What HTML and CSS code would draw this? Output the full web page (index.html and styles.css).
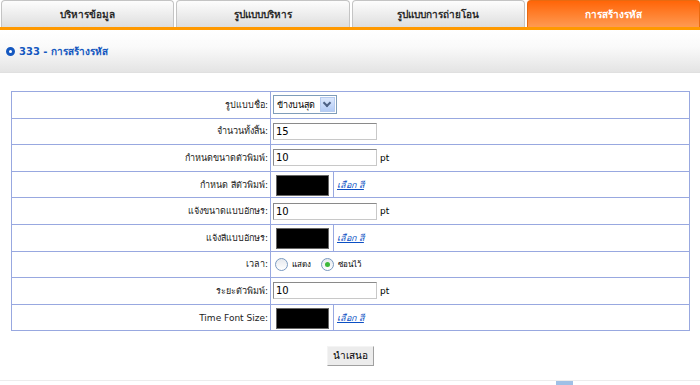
FILE: index.html
```html
<!DOCTYPE html>
<html lang="th">
<head>
  <meta charset="UTF-8">
  <title>การสร้างรหัส</title>
  <link rel="stylesheet" href="styles.css">
</head>
<body>
  <div class="tabs">
    <div class="tab">บริหารข้อมูล</div>
    <div class="tab">รูปแบบบริหาร</div>
    <div class="tab">รูปแบบการถ่ายโอน</div>
    <div class="tab active">การสร้างรหัส</div>
  </div>

  <div class="titlebar">
    <span class="bullet"></span>
    <span class="title">333 - การสร้างรหัส</span>
  </div>

  <!-- ฟอร์มตั้งค่า -->
  <table class="form">
    <tr>
      <td class="label">รูปแบบชื่อ:</td>
      <td class="field">
        <span class="select">ข้างบนสุด<span class="arrow"></span></span>
      </td>
    </tr>
    <tr>
      <td class="label">จำนวนทั้งสิ้น:</td>
      <td class="field"><span class="input">15</span></td>
    </tr>
    <tr>
      <td class="label">กำหนดขนาดตัวพิมพ์:</td>
      <td class="field"><span class="input">10</span><span class="unit">pt</span></td>
    </tr>
    <tr>
      <td class="label">กำหนด สีตัวพิมพ์:</td>
      <td class="field color-field">
        <div class="color-row"><span class="swatch"></span><a class="pick" href="#">เลือก สี</a></div>
      </td>
    </tr>
    <tr>
      <td class="label">แจ้งขนาดแบบอักษร:</td>
      <td class="field"><span class="input">10</span><span class="unit">pt</span></td>
    </tr>
    <tr>
      <td class="label">แจ้งสีแบบอักษร:</td>
      <td class="field color-field">
        <div class="color-row"><span class="swatch"></span><a class="pick" href="#">เลือก สี</a></div>
      </td>
    </tr>
    <tr>
      <td class="label">เวลา:</td>
      <td class="field">
        <span class="radio"></span><span class="radio-text">แสดง</span>
        <span class="radio checked"></span><span class="radio-text">ซ่อนไว้</span>
      </td>
    </tr>
    <tr>
      <td class="label">ระยะตัวพิมพ์:</td>
      <td class="field"><span class="input">10</span><span class="unit">pt</span></td>
    </tr>
    <tr>
      <td class="label">Time Font Size:</td>
      <td class="field color-field">
        <div class="color-row"><span class="swatch"></span><a class="pick" href="#">เลือก สี</a></div>
      </td>
    </tr>
  </table>

  <div class="actions">
    <span class="btn">นำเสนอ</span>
  </div>

  <div class="footer"><span class="footer-mark"></span></div>
</body>
</html>
```

FILE: styles.css
```css
body {
  margin: 0;
  background: #fff;
  font-family: "DejaVu Sans", "Noto Sans", sans-serif;
  font-size: 10px;
  color: #000;
}

/* แท็บด้านบน */
.tabs {
  display: flex;
  gap: 2px;
  padding-left: 1px;
  border-bottom: 3px solid #ff9900;
}

.tab {
  flex: 1;
  height: 26px;
  line-height: 27px;
  text-align: center;
  font-weight: bold;
  font-size: 10px;
  color: #2a2a2a;
  border: 1px solid #c4c4c4;
  border-bottom: none;
  border-radius: 4px 4px 0 0;
  background: linear-gradient(#fdfdfd, #dedede);
}

.tab.active {
  color: #fff;
  border-color: #e86a10;
  background: linear-gradient(#ff6508, #ff9a52);
}

/* แถบหัวข้อ */
.titlebar {
  height: 42px;
  display: flex;
  align-items: center;
  padding-left: 6px;
  gap: 4px;
  background: linear-gradient(#ffffff, #fafafa 40%, #e4e4e4);
  border-bottom: 1px solid #e0e0e0;
}

.bullet {
  width: 3px;
  height: 3px;
  border-radius: 50%;
  border: 3px solid #1558c0;
  background: #fff;
}

.title {
  color: #1558c0;
  font-weight: bold;
  font-size: 10px;
}

/* ตาราง */
.form {
  margin: 18px 0 0 11px;
  width: 679px;
  border-collapse: collapse;
}

.form td {
  border: 1px solid #98a8e0;
  height: 25.6px;
  padding: 0;
}

.label {
  width: 256px;
  text-align: right;
  padding-right: 2px !important;
  font-size: 9px;
  color: #222;
}

.field {
  padding-left: 2px !important;
}

.input {
  display: inline-block;
  width: 100px;
  height: 15px;
  line-height: 15px;
  padding-left: 2px;
  border: 1px solid #8a8a8a;
  border-right-color: #c8c8c8;
  border-bottom-color: #c8c8c8;
  font-size: 10px;
  vertical-align: middle;
}

.unit {
  margin-left: 3px;
  vertical-align: middle;
  font-size: 9px;
}

.select {
  display: inline-flex;
  align-items: center;
  justify-content: space-between;
  box-sizing: border-box;
  width: 64px;
  height: 19px;
  padding-left: 3px;
  border: 1px solid #7f9db9;
  font-size: 9px;
  vertical-align: middle;
}

.arrow {
  width: 15px;
  height: 15px;
  margin-right: 1px;
  background: linear-gradient(#dce8fd, #b4ccf6);
  border: 1px solid #b6cbef;
  box-sizing: border-box;
  position: relative;
}

.arrow::after {
  content: "";
  position: absolute;
  left: 3px;
  top: 2px;
  width: 4px;
  height: 4px;
  border-right: 2px solid #4d6185;
  border-bottom: 2px solid #4d6185;
  transform: rotate(45deg);
}

.color-field {
  padding-left: 0 !important;
}

.color-row {
  display: flex;
  align-items: stretch;
  height: 25.6px;
}

.swatch {
  width: 51px;
  height: 19px;
  margin: 3px 4px 0 5px;
  background: #000;
  border: 1px solid #666;
}

.color-row .pick {
  border-left: 1px solid #98a8e0;
  padding-left: 3px;
  line-height: 26px;
}

.pick {
  color: #0b4fc4;
  font-size: 9px;
  font-style: italic;
  text-decoration: underline;
}

.radio {
  display: inline-block;
  width: 11px;
  height: 11px;
  border-radius: 50%;
  border: 1px solid #7a9ac0;
  background: linear-gradient(#e6e9ee, #fff);
  vertical-align: middle;
  margin-left: 2px;
  position: relative;
}

.radio.checked::after {
  content: "";
  position: absolute;
  left: 3px;
  top: 3px;
  width: 5px;
  height: 5px;
  border-radius: 50%;
  background: #3cb83a;
}

.radio-text {
  font-size: 8px;
  margin: 0 5px 0 4px;
  vertical-align: middle;
}

/* ปุ่ม */
.actions {
  text-align: center;
  margin-top: 15px;
}

.btn {
  display: inline-block;
  padding: 0 5px;
  height: 18px;
  line-height: 18px;
  font-size: 10px;
  background: #ececec;
  border: 1px solid #a0a0a0;
  border-top-color: #f4f4f4;
  border-left-color: #f4f4f4;
}

.footer {
  margin-top: 14px;
  height: 4px;
  border-top: 1px solid #ececec;
  position: relative;
}

.footer-mark {
  position: absolute;
  left: 556px;
  top: 0;
  width: 17px;
  height: 4px;
  background: #9fc0e6;
}
```
